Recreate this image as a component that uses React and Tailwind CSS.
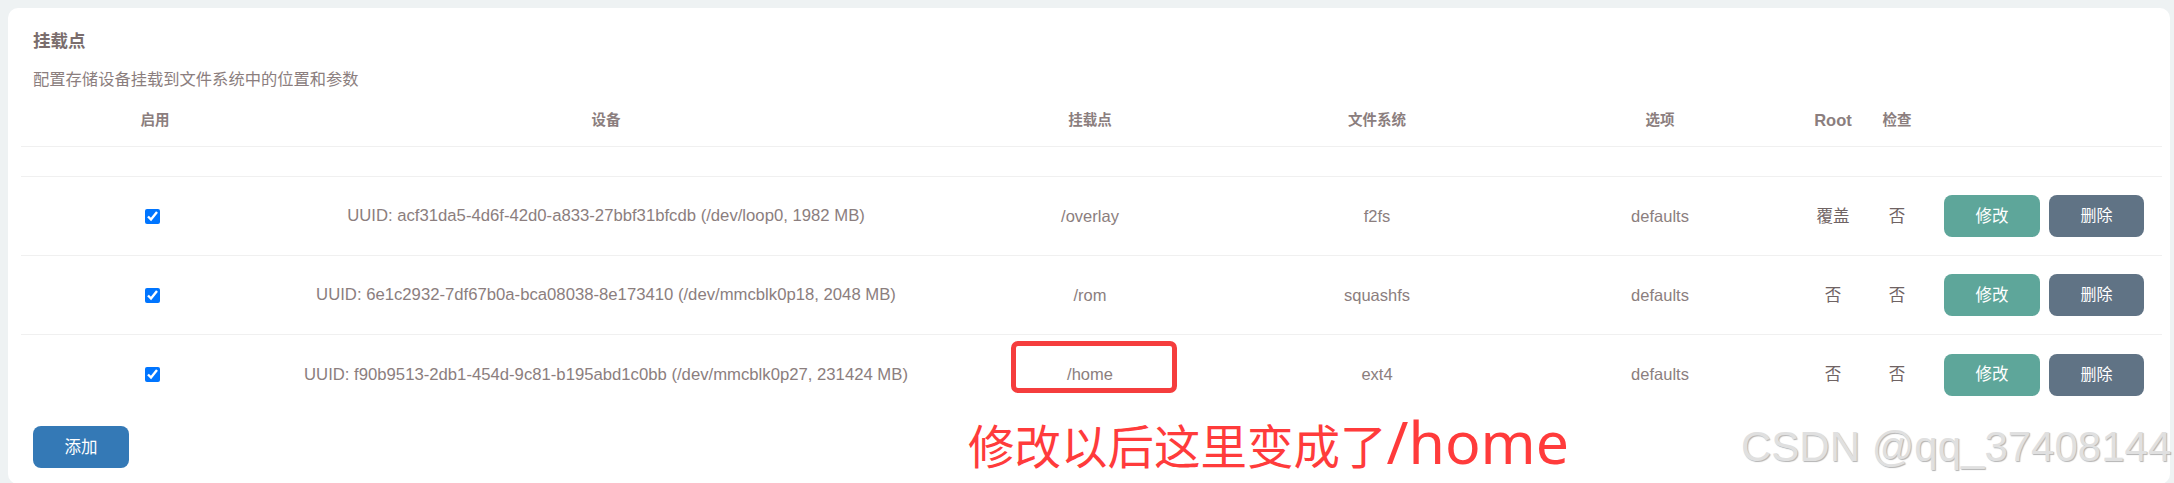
import React from 'react';

const rows = [
    { dev: 'UUID: acf31da5-4d6f-42d0-a833-27bbf31bfcdb (/dev/loop0, 1982 MB)', mp: '/overlay', fs: 'f2fs', opt: 'defaults', root: '覆盖', check: '否' },
    { dev: 'UUID: 6e1c2932-7df67b0a-bca08038-8e173410 (/dev/mmcblk0p18, 2048 MB)', mp: '/rom', fs: 'squashfs', opt: 'defaults', root: '否', check: '否' },
    { dev: 'UUID: f90b9513-2db1-454d-9c81-b195abd1c0bb (/dev/mmcblk0p27, 231424 MB)', mp: '/home', fs: 'ext4', opt: 'defaults', root: '否', check: '否' },
];

const cols = 'grid grid-cols-[268px_634px_334px_240px_306px_60px_68px_1fr] items-center';

export default function App() {
    return (
        <div className="relative h-screen overflow-hidden bg-[#eef2f3] pt-2 pl-2 pr-1 font-['Liberation_Sans','Noto_Sans_CJK_SC',sans-serif] text-[#8b7e7e]">
            <div className="bg-white rounded-[10px] pt-[21px] pl-[13px] pr-2 pb-4">
                <h2 className="pl-3 text-[17.5px] leading-6 font-bold text-[#7a6d6d]">挂载点</h2>
                <p className="pl-3 mt-[14px] text-[16.3px] leading-6">配置存储设备挂载到文件系统中的位置和参数</p>

                <div className={`${cols} mt-[4px] h-[52px] border-b border-[#f0f0f0] text-[14.5px] font-bold text-center`}>
                    <div>启用</div>
                    <div>设备</div>
                    <div>挂载点</div>
                    <div>文件系统</div>
                    <div className="pl-5">选项</div>
                    <div className="text-[16.5px]">Root</div>
                    <div>检查</div>
                    <div />
                </div>
                <div className="h-[30px] border-b border-[#f0f0f0]" />

                {rows.map((r, i) => (
                    <div
                        key={i}
                        className={`${cols} h-[79px] text-[16.5px] text-center ${i < rows.length - 1 ? 'border-b border-[#f0f0f0]' : ''}`}
                    >
                        <div className="flex justify-center pr-[6px]">
                            <input type="checkbox" defaultChecked className="w-[15px] h-[15px] accent-[#0075ff]" />
                        </div>
                        <div className="whitespace-nowrap text-[16.7px]">{r.dev}</div>
                        <div>{r.mp}</div>
                        <div>{r.fs}</div>
                        <div className="pl-5">{r.opt}</div>
                        <div className="text-[#6f6363]">{r.root}</div>
                        <div className="text-[#6f6363]">{r.check}</div>
                        <div className="flex gap-[9px] pl-[13px]">
                            <button className="w-[96px] h-[42px] rounded-[8px] bg-[#5ea69a] text-white text-[16.5px]">修改</button>
                            <button className="w-[95px] h-[42px] rounded-[8px] bg-[#607385] text-white text-[16px]">删除</button>
                        </div>
                    </div>
                ))}

                <button className="mt-3 ml-3 w-[96px] h-[42px] rounded-[8px] bg-[#3479b6] text-white text-[16.5px]">添加</button>
            </div>

            {/* annotation overlay */}
            <div className="absolute left-[1011px] top-[341px] w-[166px] h-[52px] border-[5px] border-[#f53d3d] rounded-[7px]" />
            <div className="absolute left-[968px] top-[412px] flex items-baseline leading-none text-[#ff3b3b] whitespace-nowrap">
                <span className="text-[46.5px] font-['Noto_Sans_CJK_SC',sans-serif]">修改以后这里变成了</span>
                <span className="text-[59px] font-['Noto_Sans',sans-serif]">/home</span>
            </div>
            <div className="absolute left-[1741px] top-[426px] text-[42px] leading-none text-[#e0e0e0] font-['Liberation_Sans',sans-serif] whitespace-nowrap [text-shadow:1px_1px_1px_rgba(0,0,0,0.3)]">
                CSDN @qq_37408144
            </div>
        </div>
    );
}
